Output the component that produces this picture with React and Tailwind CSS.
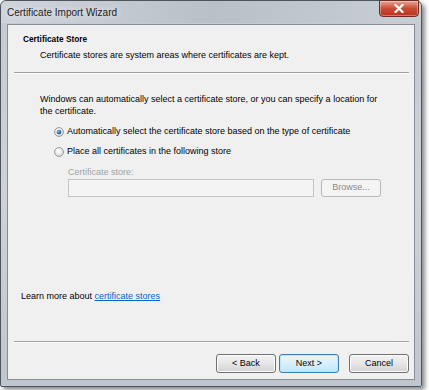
import React from "react";

const font = { fontFamily: '"Liberation Sans", Arial, sans-serif' };

const Radio = ({ checked }) => (
  <svg width="10" height="10" viewBox="0 0 10 10" aria-hidden="true">
    <defs>
      <radialGradient id="rfill" cx="0.4" cy="0.35" r="0.7">
        <stop offset="0" stopColor="#ffffff" />
        <stop offset="1" stopColor="#d6d9dc" />
      </radialGradient>
      <radialGradient id="rdot" cx="0.4" cy="0.35" r="0.7">
        <stop offset="0" stopColor="#8fd0f2" />
        <stop offset="0.6" stopColor="#2a6da3" />
        <stop offset="1" stopColor="#173b5c" />
      </radialGradient>
    </defs>
    <circle cx="5" cy="5" r="4.4" fill="url(#rfill)" stroke="#8a8e93" strokeWidth="0.9" />
    {checked && <circle cx="5" cy="5" r="2.3" fill="url(#rdot)" />}
  </svg>
);

const Button = ({ children, primary }) => (
  <button
    className={
      primary
        ? "w-[60px] h-[19px] rounded-[3px] border border-[#3c7fb1] bg-gradient-to-b from-[#eaf6fd] via-[#d9f0fc] to-[#bee6fd] text-[9px] text-black shadow-[inset_0_0_0_1px_#bfe3f7]"
        : "w-[60px] h-[19px] rounded-[3px] border border-[#707070] bg-gradient-to-b from-[#f2f2f2] via-[#e6e6e6] to-[#d2d2d2] text-[9px] text-black shadow-[inset_0_0_0_1px_#fcfcfc]"
    }
    style={font}
  >
    {children}
  </button>
);

export default function App() {
  return (
    <div className="w-[429px] h-[390px] bg-white" style={font}>
      <div className="w-[422px] h-[387px] rounded-t-[6px] rounded-b-[2px] border border-[#4d545c] bg-gradient-to-b from-[#c3cad1] via-[#cdd3d9] to-[#bfc6cd] flex flex-col shadow-[3px_3px_4px_rgba(0,0,0,0.45)]">
        <div className="relative h-[22px] flex items-center pl-[6px] bg-gradient-to-r from-[#cfd5db] via-[#b9c0c8] to-[#c8ced4] rounded-t-[6px]">
          <span className="text-[10px] text-[#1b1b1b] [text-shadow:0_0_6px_#ffffff]">
            Certificate Import Wizard
          </span>
          <div className="absolute right-[2px] top-[-1px] w-[40px] h-[17px] rounded-b-[4px] border border-[#6b2a22] bg-gradient-to-b from-[#e8a394] via-[#c94a36] to-[#b8321c] flex items-center justify-center shadow-[inset_0_0_0_1px_rgba(255,255,255,0.35)]">
            <svg width="10" height="9" viewBox="0 0 10 9" aria-hidden="true">
              <path d="M1.5 1 L8.5 8 M8.5 1 L1.5 8" stroke="#ffffff" strokeWidth="2.2" strokeLinecap="square" />
            </svg>
          </div>
        </div>
        <div className="mx-[6px] mb-[6px] mt-[1px] flex-1 border border-[#868d95] bg-[#f0f0f0] flex flex-col">
          <div className="pt-[8px] pl-[15px] text-[8.3px] font-bold leading-[12px] text-black">
            Certificate Store
          </div>
          <div className="mt-[4px] pl-[32px] text-[9px] leading-[12px] text-black">
            Certificate stores are system areas where certificates are kept.
          </div>
          <div className="mt-[11px] ml-[6px] mr-[5px] h-[2px] border-t border-[#a0a0a0] border-b border-b-white" />
          <div className="mt-[19px] pl-[32px] text-[9px] leading-[12px] text-black whitespace-nowrap">
            Windows can automatically select a certificate store, or you can specify a location for
            <br />
            the certificate.
          </div>
          <div className="mt-[9px] pl-[46px] flex items-center gap-[3px] h-[12px] text-[9px] text-black">
            <Radio checked />
            <span>Automatically select the certificate store based on the type of certificate</span>
          </div>
          <div className="mt-[8px] pl-[46px] flex items-center gap-[3px] h-[12px] text-[9px] text-black">
            <Radio />
            <span>Place all certificates in the following store</span>
          </div>
          <div className="mt-[8px] pl-[60px] text-[9px] leading-[12px] text-[#a3a3a3]">
            Certificate store:
          </div>
          <div className="mt-[1px] pl-[60px] flex gap-[7px]">
            <div className="w-[246px] h-[18px] border border-[#c3c6c9] bg-[#f4f4f4]" />
            <div className="w-[60px] h-[18px] rounded-[3px] border border-[#b5b9bd] bg-[#f4f4f4] flex items-center justify-center text-[9px] text-[#8a8a8a]">
              Browse...
            </div>
          </div>
          <div className="mt-auto pl-[13px] text-[9px] leading-[12px] text-black">
            Learn more about{" "}
            <span className="text-[#0066cc] underline">certificate stores</span>
          </div>
          <div className="mt-[39px] ml-[6px] mr-[5px] h-[2px] border-t border-[#a0a0a0] border-b border-b-white" />
          <div className="mt-[11px] mb-[6px] pr-[5px] flex justify-end">
            <Button>&lt; Back</Button>
            <div className="w-[3px]" />
            <Button primary>Next &gt;</Button>
            <div className="w-[10px]" />
            <Button>Cancel</Button>
          </div>
        </div>
      </div>
    </div>
  );
}
